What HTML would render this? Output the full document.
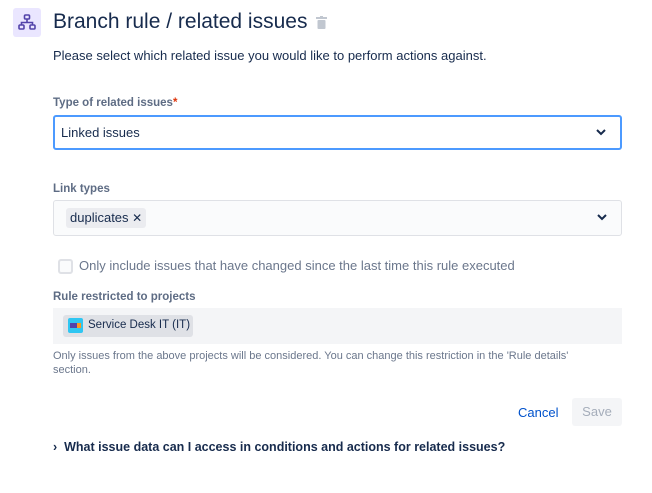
<!DOCTYPE html>
<html><head><style>
body{margin:0;width:652px;height:493px;background:#fff;font-family:"Liberation Sans",sans-serif;color:#172b4d;position:relative;overflow:hidden}
.a{position:absolute;white-space:nowrap}
.lbl{font-size:11.5px;font-weight:bold;color:#5e6c84}
.sel{border:1px solid #dfe1e6;background:#fafbfc;border-radius:3px;box-sizing:border-box}
.chev{position:absolute;right:14px;top:50%;margin-top:-4px}
</style></head><body>
<div class="a" style="left:13px;top:8px;width:28px;height:29px;background:#eae6ff;border-radius:3px">
<svg width="28" height="29" viewBox="0 0 28 29"><g fill="none" stroke="#5243aa" stroke-width="1.6"><rect x="11.5" y="7" width="5" height="4" rx="1"/><path d="M14 11v3M8.5 17v-2.5h11V17"/><rect x="6" y="17" width="5" height="4" rx="1"/><rect x="17" y="17" width="5" height="4" rx="1"/></g></svg></div>
<div class="a" style="left:53px;top:8px;font-size:21px;font-weight:500;line-height:28px">Branch rule / related issues</div>
<svg class="a" style="left:316px;top:16px" width="11" height="13" viewBox="0 0 11 13"><rect x="0" y="1" width="11" height="2" fill="#c1c7d0"/><rect x="4" y="0" width="3" height="2" fill="#c1c7d0"/><rect x="1.5" y="4" width="8" height="9" rx="1" fill="#c1c7d0"/></svg>
<div class="a" style="left:53px;top:48px;font-size:13px">Please select which related issue you would like to perform actions against.</div>
<div class="a lbl" style="left:53px;top:97px">Type of related issues<span style="color:#de350b">*</span></div>
<div class="a sel" style="left:53px;top:115px;width:569px;height:35px;border:2px solid #4c9aff;background:#fff"><span class="a" style="left:6px;top:8px;font-size:13px">Linked issues</span><svg class="chev" width="10" height="7"><path d="M1 1l4 4 4-4" stroke="#172b4d" stroke-width="2" fill="none"/></svg></div>
<div class="a lbl" style="left:53px;top:183px">Link types</div>
<div class="a sel" style="left:53px;top:200px;width:569px;height:36px"><span class="a" style="left:12px;top:7px;height:20px;padding:0 4px;background:#ebecf0;border-radius:3px;font-size:13px;line-height:20px">duplicates <span style="font-size:12px">✕</span></span><svg class="chev" width="10" height="7"><path d="M1 1l4 4 4-4" stroke="#172b4d" stroke-width="2" fill="none"/></svg></div>
<div class="a" style="left:58px;top:259px;width:11px;height:11px;border:2px solid #dfe1e6;border-radius:3px;background:#fafbfc"></div>
<div class="a" style="left:79px;top:258px;font-size:13px;color:#6b778c">Only include issues that have changed since the last time this rule executed</div>
<div class="a lbl" style="left:53px;top:291px">Rule restricted to projects</div>
<div class="a" style="left:53px;top:308px;width:569px;height:36px;background:#f4f5f7"></div>
<div class="a" style="left:63px;top:315px;width:130px;height:22px;background:#dfe1e6;border-radius:3px"><div class="a" style="left:5px;top:3px;width:15px;height:15px;background:#2fc6f2;border-radius:2px"><div class="a" style="left:2px;top:5px;width:7px;height:5px;background:#5243aa"></div><div class="a" style="left:9px;top:5px;width:4px;height:5px;background:#ff991f"></div></div><span class="a" style="left:25px;top:4px;font-size:11.5px">Service Desk IT (IT)</span></div>
<div class="a" style="left:53px;top:349px;font-size:11px;color:#6b778c;line-height:14px">Only issues from the above projects will be considered. You can change this restriction in the 'Rule details'<br>section.</div>
<div class="a" style="left:518px;top:405px;font-size:13px;color:#0052cc">Cancel</div>
<div class="a" style="left:572px;top:398px;width:50px;height:28px;background:#f4f5f7;border-radius:3px;color:#a5adba;font-size:13px;text-align:center;line-height:28px">Save</div>
<div class="a" style="left:53px;top:440px;font-size:12.5px;font-weight:bold">›&nbsp; What issue data can I access in conditions and actions for related issues?</div>
</body></html>
